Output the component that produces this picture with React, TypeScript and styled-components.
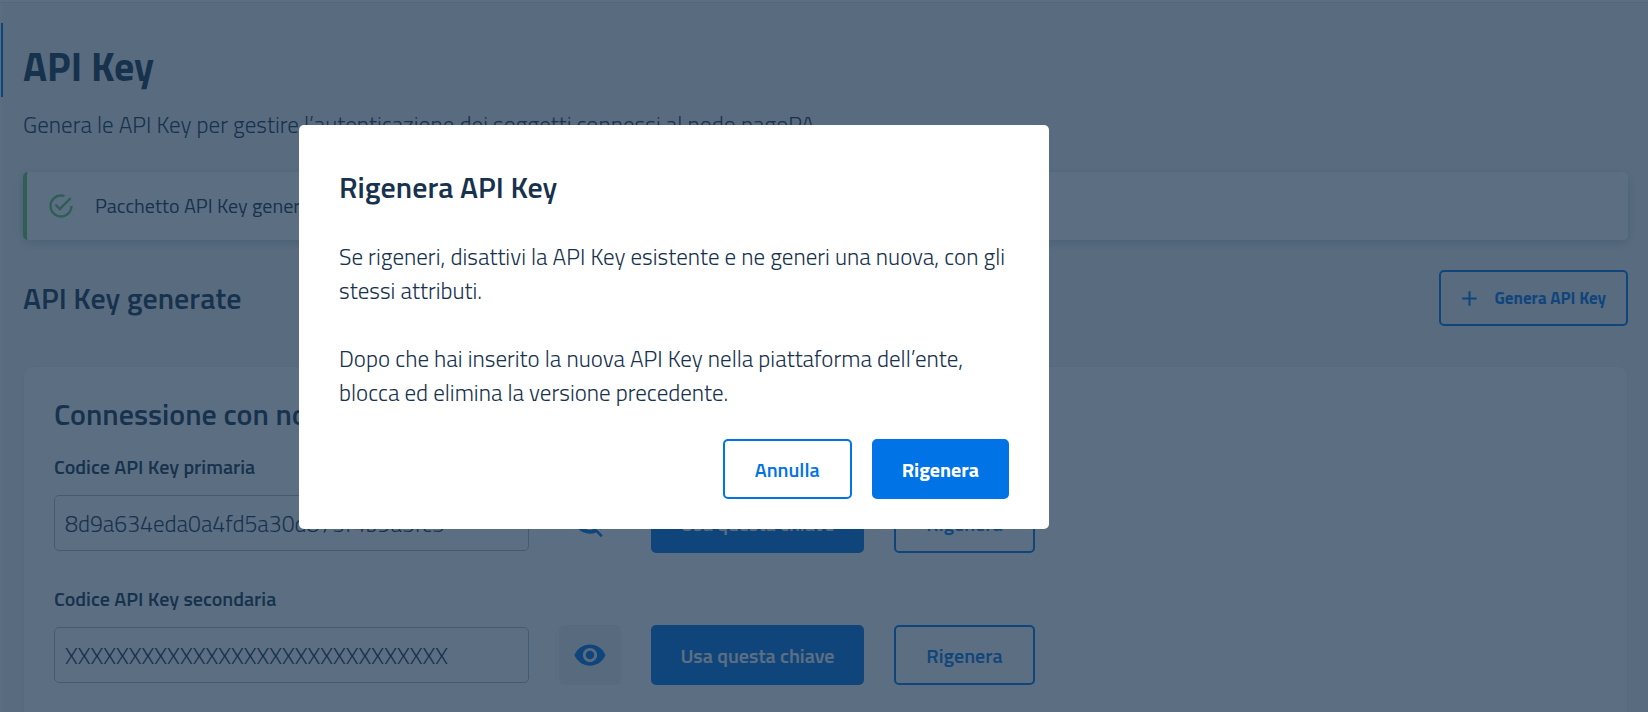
import React from "react";
import styled, { createGlobalStyle, css } from "styled-components";
import { MdAdd, MdVisibility, MdVisibilityOff } from "react-icons/md";

const color = {
  text: "#17324d",
  primary: "#0073e6",
  success: "#6cc66a",
  page: "#f5f5f5",
};

const GlobalStyle = createGlobalStyle`
  *, *::before, *::after { box-sizing: border-box; }
  body {
    margin: 0;
    background: ${color.page};
    color: ${color.text};
    font-family: "Titillium Web", Lato, "Open Sans", sans-serif;
    font-size: 23px;
    font-weight: 300;
  }
  html, body { height: 100%; overflow: hidden; }
  h1, h2, h3, p { margin: 0; }
`;

const Shell = styled.div`
  display: flex;
  flex-direction: column;
  min-height: 100vh;
`;

const TopBar = styled.header`
  height: 3px;
  background: #fff;
  border-bottom: 1px solid #e3e7eb;
`;

const Body = styled.div`
  display: flex;
  flex: 1;
`;

const SideNav = styled.nav`
  display: flex;
  justify-content: flex-end;
  width: 3px;
  padding-top: 20px;
  background: #fafafa;
`;

const ActiveMark = styled.span`
  width: 2px;
  height: 74px;
  background: ${color.primary};
`;

const Main = styled.main`
  flex: 1;
  min-width: 0;
  padding: 40px 20px 0;
`;

const PageTitle = styled.h1`
  font-size: 40px;
  line-height: 48px;
  font-weight: 700;
`;

const Lead = styled.p`
  margin-top: 17px;
  font-size: 23px;
  line-height: 34px;
`;

const Alert = styled.div`
  display: flex;
  align-items: center;
  gap: 20px;
  height: 68px;
  margin-top: 30px;
  padding-left: 20px;
  border-left: 4px solid ${color.success};
  border-radius: 5px;
  background: #fff;
  box-shadow: 0 3px 12px rgba(0, 43, 85, 0.2);
  font-size: 20px;
  line-height: 30px;
  font-weight: 400;
`;

const SectionHead = styled.div`
  display: flex;
  align-items: center;
  justify-content: space-between;
  margin-top: 30px;
`;

const SectionTitle = styled.h2`
  font-size: 30px;
  line-height: 36px;
  font-weight: 600;
`;

const Button = styled.button<{ $solid?: boolean; $compact?: boolean }>`
  display: inline-flex;
  align-items: center;
  justify-content: center;
  gap: 12px;
  height: 60px;
  padding: 0 30px;
  border: 2px solid ${color.primary};
  border-radius: 5px;
  background: transparent;
  color: ${color.primary};
  font: inherit;
  font-size: 20px;
  font-weight: ${(p) => (p.$solid ? 700 : 600)};
  white-space: nowrap;
  ${(p) => p.$solid && css`
    padding: 0 28px;
    background: ${color.primary};
    color: #fff;
  `}
  ${(p) => p.$compact && css`
    height: 56px;
    padding: 0 20px 0 16px;
    font-size: 17px;
    font-weight: 700;
  `}
`;

const Card = styled.section`
  margin-top: 40px;
  padding: 29px 30px 30px;
  border: 1px solid #eceef0;
  border-radius: 10px;
  background: #fff;
`;

const CardTitle = styled.h3`
  font-size: 30px;
  line-height: 36px;
  font-weight: 600;
  margin-bottom: 23px;
`;

const Field = styled.div`
  margin-bottom: 34px;
`;

const Label = styled.label`
  display: block;
  margin-bottom: 14px;
  font-size: 20px;
  line-height: 24px;
  font-weight: 600;
`;

const FieldRow = styled.div`
  display: flex;
  align-items: center;
  gap: 30px;
`;

const KeyInput = styled.input`
  width: 475px;
  height: 56px;
  padding: 0 10px;
  border: 1px solid #b3bac1;
  border-radius: 5px;
  background: transparent;
  color: ${color.text};
  font: inherit;
  font-size: 23px;
`;

const IconButton = styled.button<{ $active?: boolean }>`
  display: flex;
  align-items: center;
  justify-content: center;
  width: 62px;
  height: 60px;
  padding: 0;
  border: 0;
  border-radius: 5px;
  background: ${(p) => (p.$active ? "#f2f2f2" : "transparent")};
  color: ${color.primary};
`;

const RowButton = styled(Button)<{ $wide?: boolean }>`
  width: ${(p) => (p.$wide ? 213 : 141)}px;
  padding: 0;
  font-weight: 600;
`;

const Backdrop = styled.div`
  position: fixed;
  inset: 0;
  display: flex;
  align-items: flex-start;
  justify-content: center;
  padding: 125px 300px 0 0;
  background: rgba(23, 50, 77, 0.7);
`;

const Dialog = styled.div`
  width: 100%;
  max-width: 750px;
  padding: 44px 40px 30px;
  border-radius: 5px;
  background: #fff;
`;

const DialogTitle = styled.h2`
  font-size: 30px;
  line-height: 36px;
  font-weight: 600;
`;

const DialogText = styled.p`
  margin-top: 35px;
  line-height: 34px;
`;

const DialogActions = styled.div`
  display: flex;
  justify-content: flex-end;
  gap: 20px;
  margin-top: 29px;
`;

function SuccessIcon() {
  return (
    <svg width="28" height="28" viewBox="0 0 24 24" fill={color.success} aria-hidden="true">
      <path d="M20,12A8,8 0 0,1 12,20A8,8 0 0,1 4,12A8,8 0 0,1 12,4C12.76,4 13.5,4.11 14.2,4.31L15.77,2.74C14.61,2.26 13.34,2 12,2A10,10 0 0,0 2,12A10,10 0 0,0 12,22A10,10 0 0,0 22,12H20M7.91,10.08L6.5,11.5L11,16L21,6L19.59,4.58L11,13.17L7.91,10.08Z" />
    </svg>
  );
}

function KeyField({ id, label, value, visible }: { id: string; label: string; value: string; visible: boolean }) {
  return (
    <Field>
      <Label htmlFor={id}>{label}</Label>
      <FieldRow>
        <KeyInput id={id} value={value} readOnly />
        <IconButton type="button" $active={!visible} aria-label={visible ? "Nascondi chiave" : "Mostra chiave"}>
          {visible ? <MdVisibilityOff size={34} /> : <MdVisibility size={34} />}
        </IconButton>
        <RowButton type="button" $solid $wide>Usa questa chiave</RowButton>
        <RowButton type="button">Rigenera</RowButton>
      </FieldRow>
    </Field>
  );
}

export default function App() {
  return (
    <>
      <GlobalStyle />
      <Shell>
        <TopBar />
        <Body>
          <SideNav><ActiveMark /></SideNav>
          <Main>
            <PageTitle>API Key</PageTitle>
            <Lead>Genera le API Key per gestire l’autenticazione dei soggetti connessi al nodo pagoPA.</Lead>
            <Alert role="status">
              <SuccessIcon />
              <span>Pacchetto API Key generato</span>
            </Alert>
            <SectionHead>
              <SectionTitle>API Key generate</SectionTitle>
              <Button type="button" $compact>
                <MdAdd size={25} />
                Genera API Key
              </Button>
            </SectionHead>
            <Card>
              <CardTitle>Connessione con nodo</CardTitle>
              <KeyField id="primary-key" label="Codice API Key primaria" value="8d9a634eda0a4fd5a30d875f4b9a5fc3" visible />
              <KeyField id="secondary-key" label="Codice API Key secondaria" value="XXXXXXXXXXXXXXXXXXXXXXXXXXXXXX" visible={false} />
            </Card>
          </Main>
        </Body>
      </Shell>
      <Backdrop>
        <Dialog role="dialog" aria-modal="true" aria-labelledby="dialog-title">
          <DialogTitle id="dialog-title">Rigenera API Key</DialogTitle>
          <DialogText>
            Se rigeneri, disattivi la API Key esistente e ne generi una nuova, con gli stessi attributi.
            <br />
            <br />
            Dopo che hai inserito la nuova API Key nella piattaforma dell’ente, blocca ed elimina la versione precedente.
          </DialogText>
          <DialogActions>
            <Button type="button">Annulla</Button>
            <Button type="button" $solid>Rigenera</Button>
          </DialogActions>
        </Dialog>
      </Backdrop>
    </>
  );
}
